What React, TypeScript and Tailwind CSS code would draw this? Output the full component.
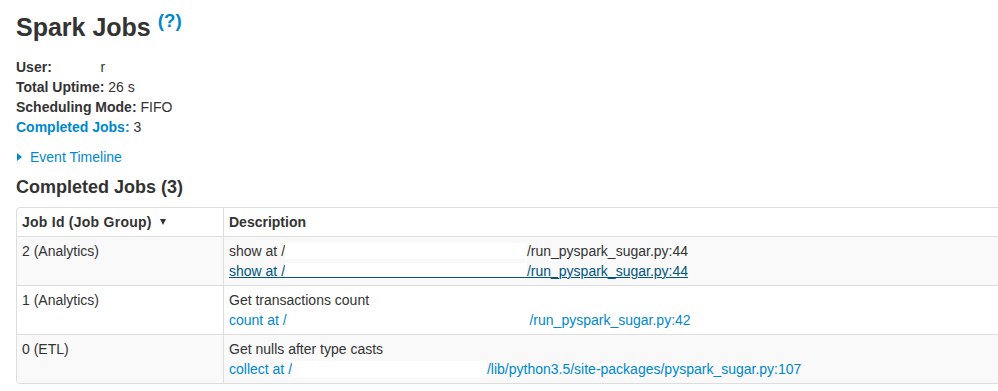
export default function App() {
  const link = "text-[#0088cc]";
  return (
    <div className="w-[998px] h-[391px] overflow-hidden bg-white text-[#333] text-[14px] leading-[20px] font-['Liberation_Sans',Arial,sans-serif]">
      <div className="pl-[16px]">
        <h3 className="mt-[7px] mb-[10px] text-[25px] leading-[40px] font-bold">
          Spark Jobs{" "}
          <sup>
            <a className={link}>(?)</a>
          </sup>
        </h3>
        <ul className="list-none">
          <li>
            <strong>User:</strong> <span className="bg-white tracking-[41px]">{"\u00a0"}</span>r
          </li>
          <li>
            <strong>Total Uptime:</strong> 26 s
          </li>
          <li>
            <strong>Scheduling Mode:</strong> FIFO
          </li>
          <li>
            <a className={link}>
              <strong>Completed Jobs:</strong>
            </a>{" "}
            3
          </li>
        </ul>
        <div className="mt-[10px] flex items-center">
          <span className="ml-[1px] mr-[8px] inline-block w-0 h-0 border-y-[4px] border-y-transparent border-l-[5px] border-l-[#0088cc]" />
          <a className={link}>Event Timeline</a>
        </div>
        <h4 className="mt-[10px] mb-[10px] text-[18px] leading-[20px] font-bold">Completed Jobs (3)</h4>
        <table className="w-[1000px] border-separate border-spacing-0 border border-[#ddd] rounded-[4px]">
          <thead>
            <tr>
              <th className="w-[206px] px-[5px] py-[4px] text-left align-bottom font-bold">
                <span className="inline-flex items-center">
                  <span className="tracking-[0.25px]">Job Id (Job Group)</span>
                  <span className="ml-[8px] inline-block w-0 h-0 border-x-[3px] border-x-transparent border-t-[6px] border-t-[#333]" />
                </span>
              </th>
              <th className="border-l border-[#ddd] px-[5px] py-[4px] text-left align-bottom font-bold">Description</th>
            </tr>
          </thead>
          <tbody>
            <tr className="bg-[#f9f9f9]">
              <td className="border-t border-[#ddd] px-[5px] py-[4px] align-top">2 (Analytics)</td>
              <td className="border-t border-l border-[#ddd] px-[5px] py-[4px] align-top">
                <div>
                  show at /<span className="bg-white tracking-[238px]">{"\u00a0"}</span>/run_pyspark_sugar.py:44
                </div>
                <div>
                  <a className="text-[#005580] underline">
                    show at /<span className="bg-white tracking-[238px]">{"\u00a0"}</span>/run_pyspark_sugar.py:44
                  </a>
                </div>
              </td>
            </tr>
            <tr>
              <td className="border-t border-[#ddd] px-[5px] py-[4px] align-top">1 (Analytics)</td>
              <td className="border-t border-l border-[#ddd] px-[5px] py-[4px] align-top">
                <div>Get transactions count</div>
                <div>
                  <a className={link}>
                    count at /<span className="bg-white tracking-[239px]">{"\u00a0"}</span>/run_pyspark_sugar.py:42
                  </a>
                </div>
              </td>
            </tr>
            <tr className="bg-[#f9f9f9]">
              <td className="border-t border-[#ddd] px-[5px] py-[4px] align-top rounded-bl-[3px]">0 (ETL)</td>
              <td className="border-t border-l border-[#ddd] px-[5px] py-[4px] align-top">
                <div>Get nulls after type casts</div>
                <div>
                  <a className={link}>
                    collect at /<span className="bg-white tracking-[191px]">{"\u00a0"}</span>/lib/python3.5/site-packages/pyspark_sugar.py:107
                  </a>
                </div>
              </td>
            </tr>
          </tbody>
        </table>
      </div>
    </div>
  );
}
